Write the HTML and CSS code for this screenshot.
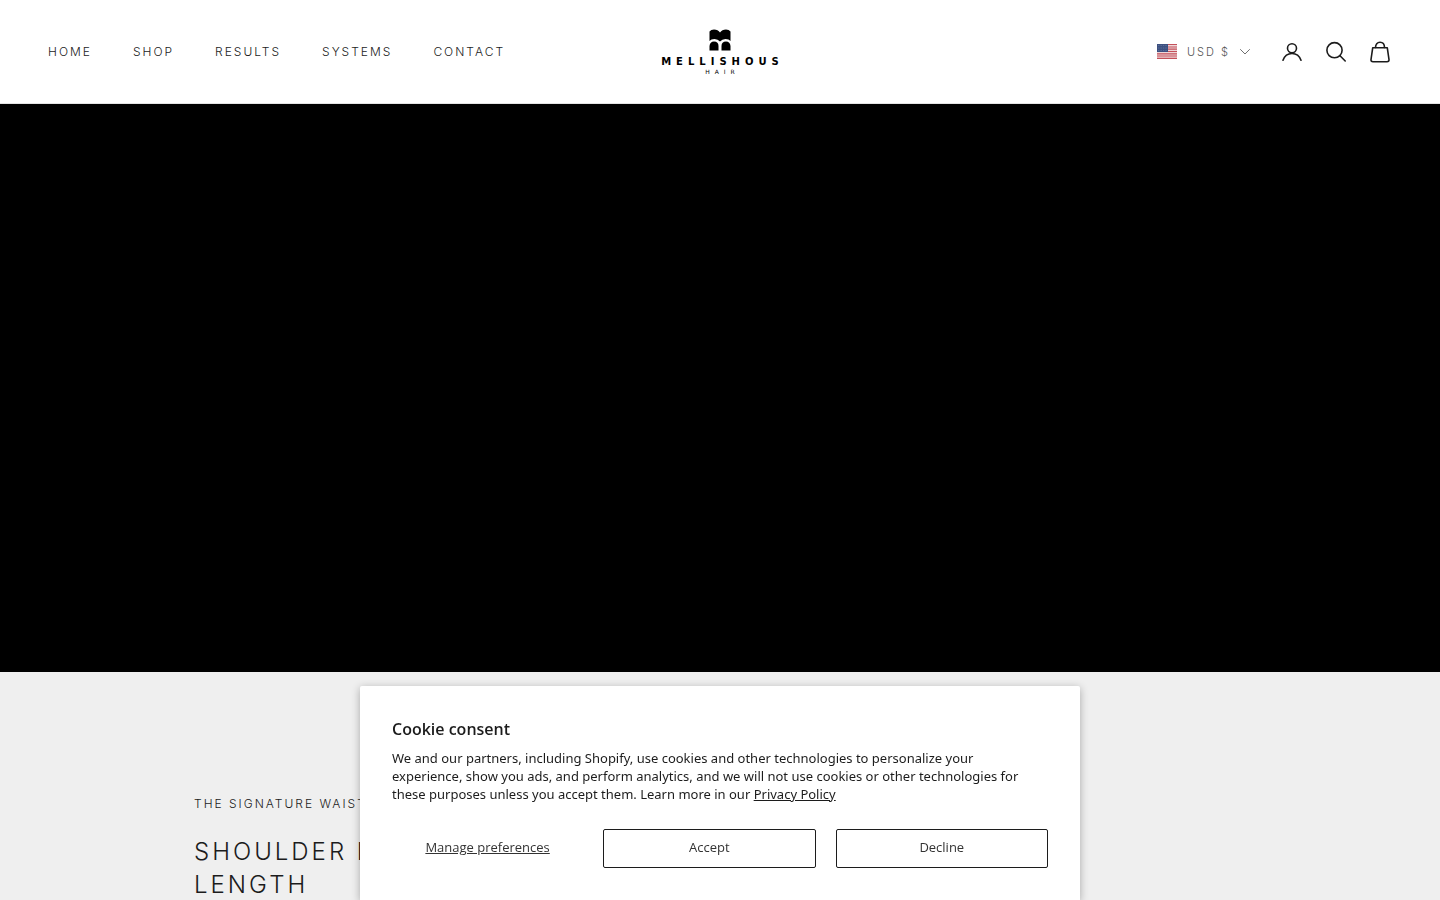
FILE: index.html
```html
<!DOCTYPE html>
<html lang="en">
<head>
    <meta charset="utf-8">
    <meta name="viewport" content="width=device-width, initial-scale=1">
    <title>Mellishous Hair</title>
    <link rel="stylesheet" href="styles.css">
</head>
<body>
    <header class="header">
        <nav class="nav">
            <a href="#">HOME</a>
            <a href="#">SHOP</a>
            <a href="#">RESULTS</a>
            <a href="#">SYSTEMS</a>
            <a href="#">CONTACT</a>
        </nav>

        <a class="logo" href="#">
            <svg class="logo-mark" width="22" height="22" viewBox="0 0 22 22" aria-hidden="true">
                <path d="M.5 12V2.500Q2 .5 5 .5Q9 .5 11 3.500Q13 .5 17 .5Q20 .5 21.500 2.500V12Q20 10 16.500 10Q13 10 11 12.500Q9 10 5.500 10Q2 10 .5 12Z"/>
                <path d="M.5 21.500V17Q1 12.500 5 12.500Q9.500 12.500 9.500 17V21.500ZM12.500 21.500V17Q12.500 12.500 17 12.500Q21 12.500 21.500 17V21.500Z"/>
            </svg>
            <span class="logo-name">MELLISHOUS</span>
            <span class="logo-sub">HAIR</span>
        </a>

        <div class="tools">
            <button class="currency" type="button">
                <svg width="20" height="15" viewBox="0 0 20 15" aria-hidden="true">
                    <rect width="20" height="15" fill="#eed6d8"/>
                    <path d="M0 .5h20M0 3h20M0 5.200h20M0 7.500h20M0 9.800h20M0 12h20M0 14.400h20" stroke="#c4505a" stroke-width="1.200"/>
                    <rect width="11" height="8" fill="#3c5080"/>
                    <path d="M1 1.500h9M1 4h9M1 6.500h9" stroke="#8494b8" stroke-width=".6" stroke-dasharray=".7 1"/>
                </svg>
                <span>USD $</span>
                <svg class="line-icon thin" width="10" height="6" viewBox="0 0 10 6" aria-hidden="true">
                    <path d="M.5 .5L5 5L9.500 .5"/>
                </svg>
            </button>
            <a href="#" aria-label="Account">
                <svg class="line-icon" width="24" height="24" viewBox="0 0 24 24" aria-hidden="true">
                    <circle cx="12" cy="8.300" r="4.500"/>
                    <path d="M3 20.300C4.500 16 8 13.500 12 13.500S19.500 16 21 20.300"/>
                </svg>
            </a>
            <a href="#" aria-label="Search">
                <svg class="line-icon" width="24" height="24" viewBox="0 0 24 24" aria-hidden="true">
                    <circle cx="10.500" cy="10.200" r="7.600"/>
                    <path d="M16 15.700L21.200 21"/>
                </svg>
            </a>
            <a href="#" aria-label="Cart">
                <svg class="line-icon" width="24" height="24" viewBox="0 0 24 24" aria-hidden="true">
                    <path d="M4.700 7.800H19.300L21 19.500Q21.200 21.700 19 21.700H5Q2.800 21.700 3 19.500Z"/>
                    <path d="M7.500 7.500C7.500 4.300 9.300 2.300 12 2.300S16.500 4.300 16.500 7.500"/>
                </svg>
            </a>
        </div>
    </header>

    <main>
        <section class="hero"></section>
        <section class="feature">
            <p class="subheading">THE SIGNATURE WAIST</p>
            <h2>SHOULDER LENGTH<br>LENGTH</h2>
        </section>
    </main>

    <div class="consent" role="dialog" aria-labelledby="consent-title">
        <h2 id="consent-title">Cookie consent</h2>
        <p>We and our partners, including Shopify, use cookies and other technologies to personalize your experience, show you ads, and perform analytics, and we will not use cookies or other technologies for these purposes unless you accept them. Learn more in our <a href="#">Privacy Policy</a></p>
        <div class="consent-buttons">
            <button class="manage" type="button">Manage preferences</button>
            <button type="button">Accept</button>
            <button type="button">Decline</button>
        </div>
    </div>
</body>
</html>
```
FILE: styles.css
```css
* {
    box-sizing: border-box;
}
body {
    margin: 0;
    font-family: Inter, "Liberation Sans", sans-serif;
    color: #1c1c1c;
    background: #efefef;
}
a {
    color: inherit;
}

/* Header */
.header {
    display: grid;
    grid-template-columns: 1fr auto 1fr;
    align-items: center;
    height: 104px;
    padding: 0 48px;
    background: #fff;
    border-bottom: 1px solid #e4e4e4;
}
.nav {
    display: flex;
    gap: 41px;
    font-size: 12px;
    font-weight: 300;
    letter-spacing: 2px;
}
.nav a {
    text-decoration: none;
}
.logo {
    display: flex;
    flex-direction: column;
    align-items: center;
    color: #000;
    text-decoration: none;
    font-family: "DejaVu Sans", sans-serif;
}
.logo-name {
    margin-top: 5px;
    padding-left: 5px;
    font-size: 10px;
    line-height: 12px;
    font-weight: 700;
    letter-spacing: 5px;
}
.logo-sub {
    padding-left: 5px;
    font-size: 6px;
    line-height: 7px;
    letter-spacing: 5px;
}
.tools {
    display: flex;
    align-items: center;
    justify-content: flex-end;
    gap: 20px;
}
.tools a {
    display: flex;
}
.currency {
    display: flex;
    align-items: center;
    gap: 10px;
    margin-right: 10px;
    padding: 0;
    border: 0;
    background: none;
    color: #555;
    font: inherit;
    font-size: 11px;
    font-weight: 300;
    letter-spacing: 2px;
}
.line-icon {
    fill: none;
    stroke: #1c1c1c;
    stroke-width: 1.6;
    stroke-linecap: round;
    stroke-linejoin: round;
}
.thin {
    stroke: #707070;
    stroke-width: 1;
}

/* Content */
.hero {
    min-height: 568px;
    background: #000;
}
.feature {
    padding: 124px 194px 0;
}
.subheading {
    margin: 0 0 23px;
    font-size: 12px;
    line-height: 16px;
    font-weight: 300;
    letter-spacing: 2px;
}
.feature h2 {
    margin: 0;
    font-size: 24px;
    line-height: 33px;
    font-weight: 300;
    letter-spacing: 3px;
}

/* Cookie banner */
.consent {
    position: fixed;
    bottom: 0;
    left: 25%;
    width: 50%;
    padding: 31px 32px 32px;
    background: #fff;
    border-radius: 2px 2px 0 0;
    box-shadow: 0 2px 8px rgba(0, 0, 0, 0.3);
    font-family: "Open Sans", sans-serif;
    font-size: 13px;
    line-height: 18px;
}
.consent h2 {
    margin: 0 0 8px;
    font-size: 16px;
    line-height: 24px;
    font-weight: 600;
}
.consent p {
    margin: 0 0 26px;
    padding-right: 12px;
    font-family: "Noto Sans", sans-serif;
}
.consent-buttons {
    display: grid;
    grid-template-columns: 9fr 10fr 10fr;
    gap: 20px;
}
.consent button {
    height: 39px;
    padding: 0 0 3px;
    border: 1px solid #1c1c1c;
    border-radius: 2px;
    background: #fff;
    color: #333;
    font: inherit;
}
.consent .manage {
    border-color: transparent;
    text-decoration: underline;
}
```
